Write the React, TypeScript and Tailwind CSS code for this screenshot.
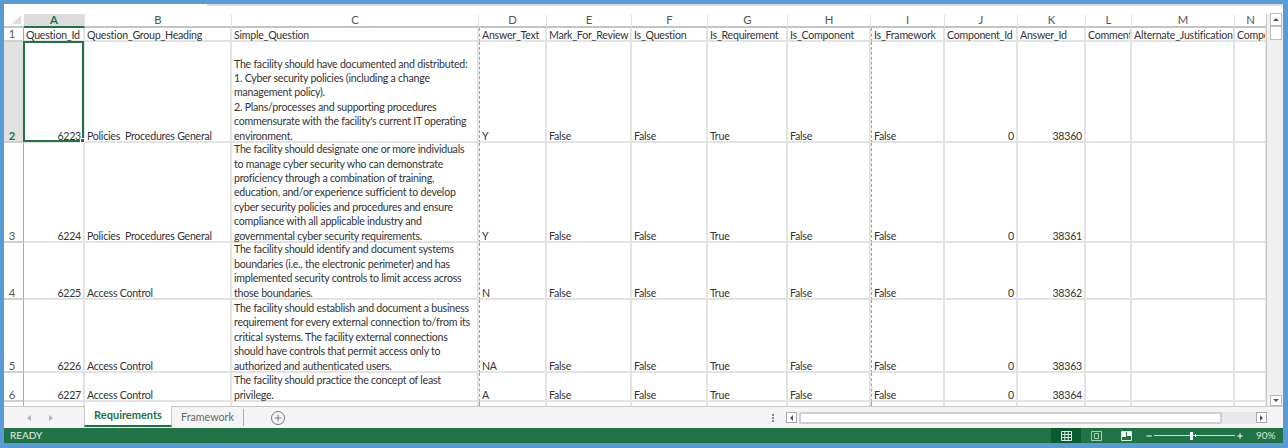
import { Plus, Minus } from "lucide-react";

const FONT = "font-['Lato','Liberation_Sans',sans-serif]";

const columns = ["A", "B", "C", "D", "E", "F", "G", "H", "I", "J", "K", "L", "M", "N"];
const GRID =
  "grid-cols-[20px_61px_147px_247px_68px_85px_76px_80px_83px_74px_73px_68px_46px_103px_32px] grid-rows-[14px_14px_101px_100px_57px_73px_29px_5px]";

const headers = [
  "Question_Id",
  "Question_Group_Heading",
  "Simple_Question",
  "Answer_Text",
  "Mark_For_Review",
  "Is_Question",
  "Is_Requirement",
  "Is_Component",
  "Is_Framework",
  "Component_Id",
  "Answer_Id",
  "Comment",
  "Alternate_Justification",
  "Compo",
];

type Row = {
  num: number;
  id: number;
  group: string;
  question: string[];
  answer: string;
  req: string;
  answerId: number;
};

const rows: Row[] = [
  {
    num: 2,
    id: 6223,
    group: "Policies  Procedures General",
    question: [
      "The facility should have documented and distributed:",
      "1. Cyber security policies (including a change",
      "management policy).",
      "2. Plans/processes and supporting procedures",
      "commensurate with the facility's current IT operating",
      "environment.",
    ],
    answer: "Y",
    req: "True",
    answerId: 38360,
  },
  {
    num: 3,
    id: 6224,
    group: "Policies  Procedures General",
    question: [
      "The facility should designate one or more individuals",
      "to manage cyber security who can demonstrate",
      "proficiency through a combination of training,",
      "education, and/or experience sufficient to develop",
      "cyber security policies and procedures and ensure",
      "compliance with all applicable industry and",
      "governmental cyber security requirements.",
    ],
    answer: "Y",
    req: "True",
    answerId: 38361,
  },
  {
    num: 4,
    id: 6225,
    group: "Access Control",
    question: [
      "The facility should identify and document systems",
      "boundaries (i.e., the electronic perimeter) and has",
      "implemented security controls to limit access across",
      "those boundaries.",
    ],
    answer: "N",
    req: "True",
    answerId: 38362,
  },
  {
    num: 5,
    id: 6226,
    group: "Access Control",
    question: [
      "The facility should establish and document a business",
      "requirement for every external connection to/from its",
      "critical systems. The facility external connections",
      "should have controls that permit access only to",
      "authorized and authenticated users.",
    ],
    answer: "NA",
    req: "True",
    answerId: 38363,
  },
  {
    num: 6,
    id: 6227,
    group: "Access Control",
    question: ["The facility should practice the concept of least", "privilege."],
    answer: "A",
    req: "True",
    answerId: 38364,
  },
];

const CELL =
  "min-w-0 overflow-x-clip whitespace-pre border-b-2 border-r-2 border-[#e3e3e3] px-[2px] flex items-end text-[10.6px] leading-[10px] tracking-[-0.24px]";

function Cell({
  children,
  right,
  dashed,
  className = "",
}: {
  children?: React.ReactNode;
  right?: boolean;
  dashed?: boolean;
  className?: string;
}) {
  return (
    <div
      className={`${CELL} ${right ? "justify-end" : ""} ${
        dashed ? "border-l border-l-[#a0a0a0] [border-left-style:dashed]" : ""
      } ${className}`}
    >
      {children}
    </div>
  );
}

function SheetRow({ row }: { row: Row }) {
  const selected = row.num === 2;
  return (
    <>
      <div
        className={`flex items-end justify-center border-b-2 border-r border-b-[#d0d0d0] border-r-[#a8a8a8] pr-[3px] leading-[10px] ${
          selected ? "bg-[#e1e1e1] font-bold text-[#217346]" : "text-[#555]"
        }`}
      >
        {row.num}
      </div>
      <Cell right className={selected ? "relative !overflow-visible" : ""}>
        {row.id}
        {selected && (
          <span className="absolute -left-[1px] -top-[1px] -right-[1px] -bottom-[1px] border-2 border-[#217346]">
            <span className="absolute -bottom-[3px] -right-[3px] h-[5px] w-[5px] border border-white bg-[#217346]" />
          </span>
        )}
      </Cell>
      <Cell>{row.group}</Cell>
      <Cell>
        <div className="-mb-[2px] flex flex-col leading-[14.4px]">
          {row.question.map((line) => (
            <span key={line}>{line}</span>
          ))}
        </div>
      </Cell>
      <Cell dashed>{row.answer}</Cell>
      <Cell>False</Cell>
      <Cell>False</Cell>
      <Cell>{row.req}</Cell>
      <Cell>False</Cell>
      <Cell dashed>False</Cell>
      <Cell right>0</Cell>
      <Cell right>{row.answerId}</Cell>
      <Cell />
      <Cell />
      <Cell />
    </>
  );
}

function Sheet() {
  return (
    <div className={`grid ${GRID} h-[392px] w-[1263px] content-start overflow-hidden border-r border-[#c8c8c8] text-[11.3px] leading-[14.4px] text-[#333]`}>
      {/* column letters */}
      <div className="relative border-b-2 border-[#c4c4c4]">
        <span className="absolute bottom-[2px] right-[3px] h-0 w-0 border-b-[9px] border-l-[9px] border-b-[#dfdfdf] border-l-transparent" />
      </div>
      {columns.map((c, i) => (
        <div
          key={c}
          className={`overflow-hidden border-r border-[#e3e3e3] text-center leading-[12px] ${
            i === 0
              ? "border-b-2 border-b-[#217346] bg-[#dcdcdc] font-bold text-[#217346]"
              : "border-b-2 border-b-[#c4c4c4] text-[#555]"
          }`}
        >
          {c}
        </div>
      ))}

      {/* row 1 */}
      <div className="flex items-center justify-center border-b-2 border-r border-b-[#d0d0d0] border-r-[#a8a8a8] pr-[3px] text-[#555]">
        1
      </div>
      {headers.map((h, i) => (
        <Cell key={h} dashed={i === 3 || i === 8} className="!items-center pt-[1px]">
          {h}
        </Cell>
      ))}

      {rows.map((row) => (
        <SheetRow key={row.num} row={row} />
      ))}

      {/* sliver of row 7 */}
      <div className="border-r border-[#a8a8a8]" />
      {headers.map((h, i) => (
        <div key={h} className={`border-r-2 border-[#e3e3e3] ${i === 3 || i === 8 ? "border-l border-dashed border-l-[#a0a0a0]" : ""}`} />
      ))}
    </div>
  );
}

function VerticalScrollbar() {
  return (
    <div className="flex h-[392px] w-[16px] flex-col items-center bg-[#f0f0f0] pl-[2px]">
      <div className="-mt-[1px] flex h-[13px] w-[12px] items-center justify-center border border-[#bbb] bg-white">
        <span className="h-0 w-0 border-x-[3px] border-b-[3px] border-x-transparent border-b-[#555]" />
      </div>
      <div className="h-[14px] w-[12px] border border-[#bbb] bg-white" />
      <div className="flex-1" />
      <div className="flex h-[11px] w-[12px] items-center justify-center border border-[#bbb] bg-white">
        <span className="h-0 w-0 border-x-[3px] border-t-[3px] border-x-transparent border-t-[#555]" />
      </div>
    </div>
  );
}

function TabBar() {
  return (
    <div className="flex h-[22px] items-stretch border-t border-[#c8c8c8] bg-[#f4f4f4] text-[10.7px]">
      <div className="flex w-[80px] items-center gap-[18px] pl-[23px]">
        <span className="h-0 w-0 border-y-[3px] border-r-[4px] border-y-transparent border-r-[#b5b5b5]" />
        <span className="h-0 w-0 border-y-[3px] border-l-[4px] border-y-transparent border-l-[#b5b5b5]" />
      </div>
      <div className="mb-[1px] -mt-[1px] flex w-[88px] items-center justify-center border-x border-b-2 border-x-[#c8c8c8] border-b-[#217346] bg-white text-[11px] font-bold text-[#217346]">
        Requirements
      </div>
      <div className="my-[2px] flex w-[72px] items-center justify-center border-r border-[#b0b0b0] text-[#666]">
        Framework
      </div>
      <div className="ml-[27px] flex items-center">
        <span className="flex h-[14px] w-[14px] items-center justify-center rounded-full border border-[#777]">
          <Plus size={10} strokeWidth={2} className="text-[#666]" />
        </span>
      </div>
      <div className="ml-[487px] flex items-center gap-[1px] text-[#999]">
        <span className="flex flex-col gap-[1px]">
          <span className="h-[2px] w-[2px] bg-[#888]" />
          <span className="h-[2px] w-[2px] bg-[#888]" />
          <span className="h-[2px] w-[2px] bg-[#888]" />
        </span>
      </div>
      <div className="ml-[12px] flex items-center">
        <div className="flex h-[11px] w-[11px] items-center justify-center border border-[#aaa] bg-white">
          <span className="h-0 w-0 border-y-[3px] border-r-[3px] border-y-transparent border-r-[#555]" />
        </div>
        <div className="ml-[2px] h-[12px] w-[423px] rounded-[2px] border-2 border-[#cfcfcf] bg-white" />
        <div className="h-[12px] w-[34px] bg-[#e8e8e8]" />
        <div className="flex h-[11px] w-[11px] items-center justify-center border border-[#aaa] bg-white">
          <span className="h-0 w-0 border-y-[3px] border-l-[3px] border-y-transparent border-l-[#555]" />
        </div>
      </div>
    </div>
  );
}

function StatusBar() {
  return (
    <div className="flex h-[15px] items-center bg-[#217346] pl-[6px] text-[10px] text-[#e4efe8]">
      <span>READY</span>
      <div className="ml-auto flex h-full items-center">
        <div className="flex h-full w-[30px] items-center justify-center bg-[#0d5b30]">
          <svg width="11" height="10" viewBox="0 0 11 10" fill="none" stroke="#dfeee5">
            <path d="M.5.5h10v9H.5zM.5 3.5h10M.5 6.5h10M3.8.5v9M7.2.5v9" />
          </svg>
        </div>
        <div className="flex w-[30px] justify-center">
          <svg width="11" height="10" viewBox="0 0 11 10" fill="none" stroke="#a9cdb8">
            <path d="M.5.5h10v9H.5zM3.5 2.5h4v5h-4z" />
          </svg>
        </div>
        <div className="flex w-[30px] justify-center">
          <svg width="11" height="10" viewBox="0 0 11 10" fill="none">
            <path d="M.5.5h10v9H.5z" stroke="#dfeee5" />
            <path d="M1 1h4v5H1zM6 1h4v4H6z" fill="#fff" />
          </svg>
        </div>
        <div className="ml-[4px] flex w-[99px] items-center text-white">
          <Minus size={8} strokeWidth={3} />
          <div className="relative mx-[1px] h-[1px] flex-1 bg-[#cfe3d7]">
            <span className="absolute -top-[3.5px] left-[36px] h-[8px] w-[3px] bg-white" />
            <span className="absolute -top-[1px] left-[41px] h-[3px] w-[1px] bg-white" />
          </div>
          <Plus size={8} strokeWidth={3} />
        </div>
        <span className="ml-[12px] w-[27px] text-[#d5e6dc]">90%</span>
      </div>
    </div>
  );
}

export default function App() {
  return (
    <div className={`${FONT} h-[448px] w-[1288px] overflow-hidden bg-[#5b9bd5] pl-[4px] pt-[4px]`}>
      <div className="w-[1279px] bg-white">
        <div className="flex h-[10px] justify-end">
          <div className="h-[2px] w-[1076px] bg-[#dcdcdc]" />
        </div>
        <div className="flex">
          <Sheet />
          <VerticalScrollbar />
        </div>
        <TabBar />
        <StatusBar />
      </div>
    </div>
  );
}
